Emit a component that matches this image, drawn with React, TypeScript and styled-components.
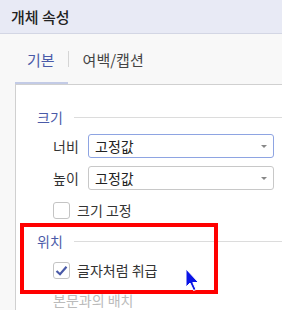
import React from "react";
import styled, { createGlobalStyle } from "styled-components";

const GlobalStyle = createGlobalStyle`
  html, body {
    margin: 0;
    padding: 0;
    background: #f8f8f8;
  }
  body {
    font-family: "Noto Sans CJK KR", "Noto Sans", sans-serif;
    color: #333;
  }
`;

const Window = styled.div`
  position: relative;
  width: 282px;
  height: 310px;
  overflow: hidden;
  background: #f8f8f8;
`;

const Header = styled.header`
  height: 33px;
  border-bottom: 1px solid #d3d6e4;
  background: #e8eaf5;
  display: flex;
  align-items: center;
  padding-left: 11px;
`;

const Title = styled.h1`
  margin: 0;
  font-size: 15px;
  font-weight: 500;
  color: #222;
`;

const Tabs = styled.div`
  display: flex;
  align-items: center;
  height: 50px;
  padding-left: 15px;
`;

const Tab = styled.div<{ $active?: boolean }>`
  height: 100%;
  display: flex;
  align-items: center;
  padding: 0 13px 0 12px;
  font-size: 15px;
  color: ${(p) => (p.$active ? "#4a5aa8" : "#444")};
  box-shadow: ${(p) => (p.$active ? "inset 0 -2px 0 #c3cbe6" : "none")};
`;

const Divider = styled.span`
  width: 1px;
  height: 16px;
  margin-right: 2px;
  background: #d5d5d5;
`;

const Panel = styled.div`
  margin-left: 15px;
  border-top: 1px solid #d0d0d0;
  border-left: 1px solid #d0d0d0;
  background: #fff;
  padding: 22px 0 0 21px;
  height: 300px;
`;

const Section = styled.section`
  & + & {
    margin-top: 5px;
  }
`;

const SectionHead = styled.div`
  display: flex;
  align-items: center;
  gap: 11px;
  height: 20px;
  margin-bottom: 3px;
  font-size: 14px;
  color: #4a5aa8;
  &::after {
    content: "";
    flex: 1;
    height: 1px;
    background: #dcdcdc;
  }
`;

const Row = styled.div`
  display: flex;
  align-items: center;
  height: 32px;
  padding-left: 16px;
  font-size: 14px;
  color: #333;
`;

const Label = styled.span`
  width: 35px;
`;

const Select = styled.div<{ $focus?: boolean }>`
  box-sizing: border-box;
  width: 186px;
  height: 24px;
  display: flex;
  align-items: center;
  justify-content: space-between;
  padding: 0 6px;
  border: 1px solid ${(p) => (p.$focus ? "#8ea4e2" : "#c8c8c8")};
  border-radius: 3px;
  background: #fff;
  font-size: 14px;
  color: #222;
  &::after {
    content: "";
    border-left: 3px solid transparent;
    border-right: 3px solid transparent;
    border-top: 3px solid #888;
  }
`;

const Check = styled.span`
  box-sizing: border-box;
  width: 17px;
  height: 17px;
  margin-right: 7px;
  border: 1px solid #c4c4c4;
  border-radius: 3px;
  background: #fff;
  display: flex;
  align-items: center;
  justify-content: center;
`;

const Muted = styled(Row)`
  height: 28px;
  color: #bbb;
`;

const Highlight = styled.div`
  position: absolute;
  left: 20px;
  top: 223px;
  width: 198px;
  height: 71px;
  box-sizing: border-box;
  border: 4px solid #ff0000;
  pointer-events: none;
`;

const Cursor = styled.svg`
  position: absolute;
  left: 185px;
  top: 268px;
`;

const Tick = () => (
  <svg width="13" height="11" viewBox="0 0 13 11">
    <path d="M1.5 6 L5 9.2 L11.5 1.8" fill="none" stroke="#4a5aa8" strokeWidth="2.2" />
  </svg>
);

export default function App() {
  return (
    <Window>
      <GlobalStyle />
      <Header>
        <Title>개체 속성</Title>
      </Header>
      <Tabs>
        <Tab $active>기본</Tab>
        <Divider />
        <Tab>여백/캡션</Tab>
      </Tabs>
      <Panel>
        <Section>
          <SectionHead>크기</SectionHead>
          <Row>
            <Label>너비</Label>
            <Select $focus>고정값</Select>
          </Row>
          <Row>
            <Label>높이</Label>
            <Select>고정값</Select>
          </Row>
          <Row>
            <Check />
            크기 고정
          </Row>
        </Section>
        <Section>
          <SectionHead>위치</SectionHead>
          <Row>
            <Check>
              <Tick />
            </Check>
            글자처럼 취급
          </Row>
          <Muted>본문과의 배치</Muted>
        </Section>
      </Panel>
      <Highlight />
      <Cursor width="16" height="24" viewBox="0 0 16 24">
        <path d="M1 1 L1 19 L5 15 L8.5 22.5 L11 21.5 L7.8 14.5 L13.5 14.5 Z" fill="#0a14e6" stroke="#fff" strokeWidth="1" />
      </Cursor>
    </Window>
  );
}
